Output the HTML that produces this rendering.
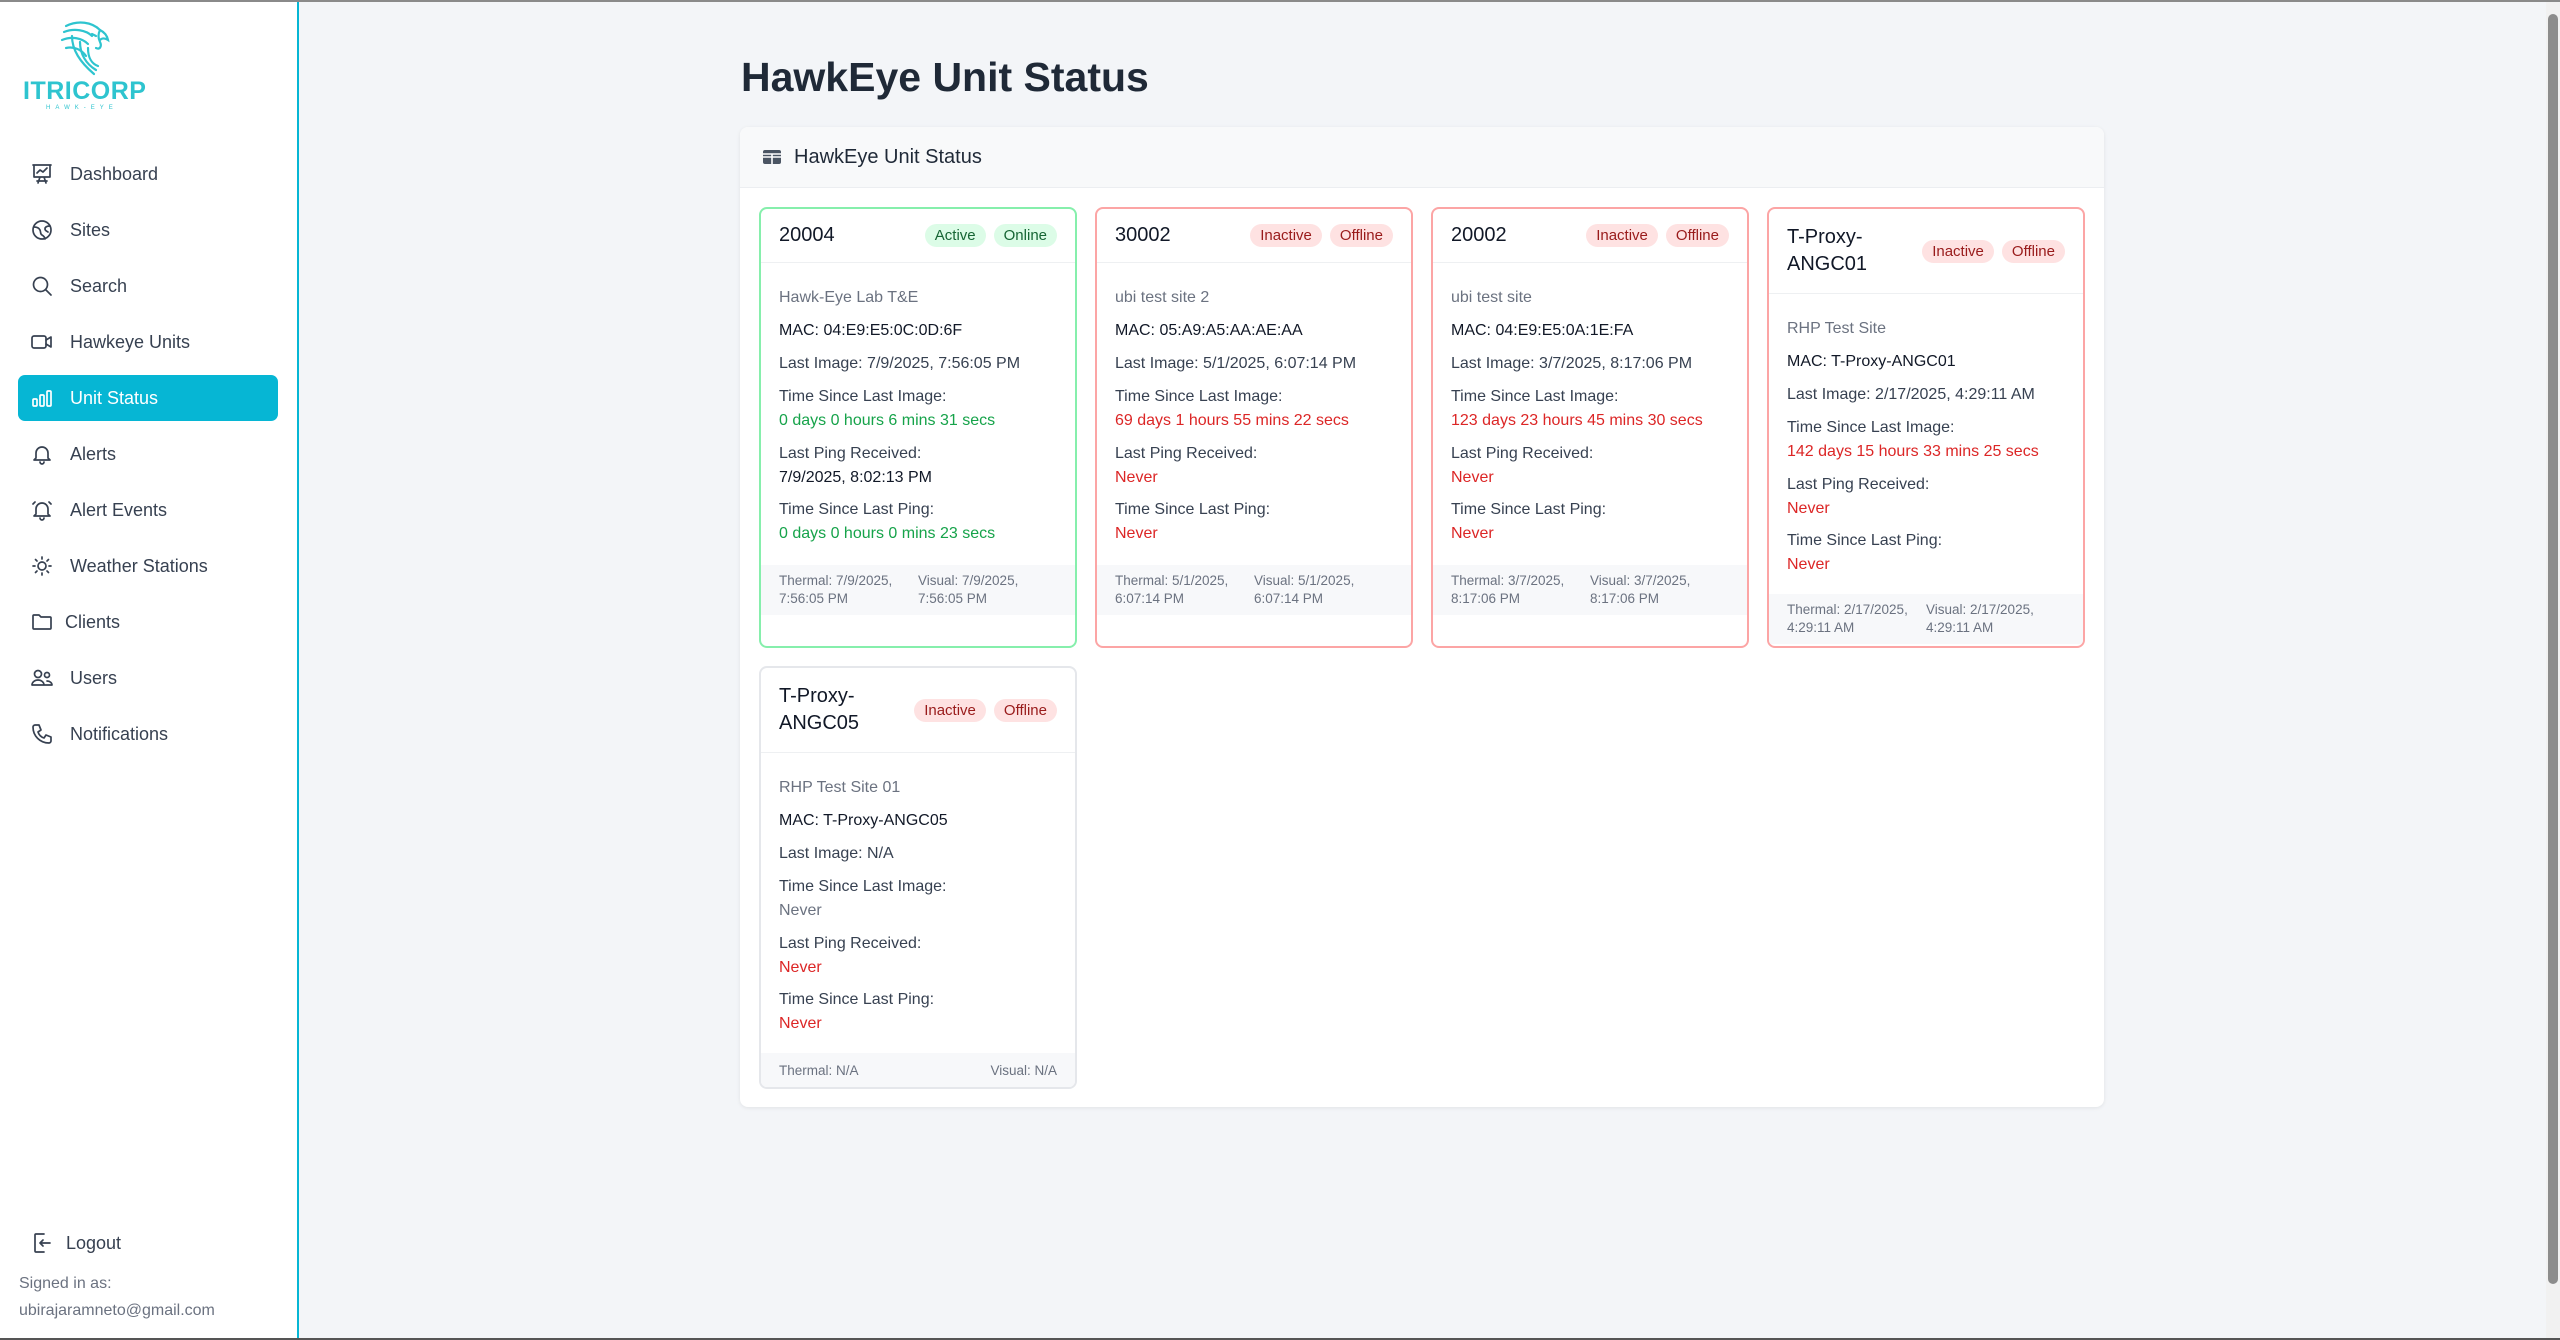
<!DOCTYPE html>
<html><head><meta charset="utf-8">
<style>
*{box-sizing:border-box;margin:0;padding:0}
html,body{width:2560px;height:1340px;overflow:hidden}
body{font-family:"Liberation Sans",sans-serif;background:#f3f5f8;position:relative;color:#1f2937}
.topline{position:absolute;left:0;top:0;width:2560px;height:2px;background:#8a8a8a;z-index:5}
.botline{position:absolute;left:0;bottom:0;width:2560px;height:2px;background:#555;z-index:5}
.side{position:absolute;left:0;top:0;width:299px;height:1340px;background:#fff;border-right:2px solid #06b6d4}
.nav{position:absolute;left:18px;width:260px;height:46px;display:flex;align-items:center;font-size:18px;color:#374151;border-radius:7px}
.nav svg{position:absolute;left:12px;width:24px;height:24px;fill:none;stroke:#374151;stroke-width:1.7;stroke-linecap:round;stroke-linejoin:round}
.nav span{position:absolute;left:52px}
.nav.act{background:#06b6d4;color:#fff}
.nav.act svg{stroke:#fff}
.scroll{position:absolute;right:0;top:0;width:14px;height:1340px;background:#f1f1f1}
.thumb{position:absolute;right:2px;top:14px;width:10px;height:1270px;background:#8c8c8c;border-radius:5px}
h1{position:absolute;left:741px;top:54px;font-size:41px;font-weight:bold;color:#1f2937}
.box{position:absolute;left:740px;top:127px;width:1364px;height:980px;background:#fff;border-radius:8px;box-shadow:0 1px 4px rgba(0,0,0,.08)}
.boxh{height:61px;background:#f8f9fa;border-bottom:1px solid #eceef1;border-radius:8px 8px 0 0;display:flex;align-items:center;padding-left:22px;font-size:20px;color:#1f2937}
.card{position:absolute;width:318px;border:2px solid #e5e7eb;border-radius:8px;background:#fff;overflow:hidden}
.card.g{border-color:#86efac}
.card.r{border-color:#fca5a5}
.ch{display:flex;align-items:center;justify-content:space-between;padding:0 18px 0 18px;border-bottom:1px solid #eef0f2;font-size:20px;color:#111827}
.ch .t{line-height:27px;font-weight:normal}
.badges{display:flex;gap:8px}
.b{font-size:15px;padding:2px 10px;border-radius:12px;line-height:19px}
.bg{background:#dcfce7;color:#166534}
.br{background:#fee2e2;color:#991b1b}
.body{padding:23px 18px 0 18px;font-size:16px;line-height:24px;color:#374151}
.body p{margin-bottom:9px}
.body p:nth-child(5){margin-bottom:8px}
.site{color:#6b7280}
.gr{color:#16a34a}.rd{color:#dc2626}.gy{color:#6b7280}.bk{color:#111827}
.ft{position:absolute;left:0;right:0;background:#f7f8fa;padding:7px 18px;font-size:13.5px;line-height:18px;color:#6b7280;display:flex}
.ft div{width:145px}
</style></head><body>
<div class="topline"></div>
<div class="side">
  <svg style="position:absolute;left:60px;top:20px" width="50" height="56" viewBox="0 0 50 56" fill="none" stroke="#2ec4cf" stroke-width="2.2" stroke-linecap="round">
    <path d="M6 6 C18 0 32 2 40 10 C44 12 47 15 48 20 C45 18 42 18 40 20"/>
    <path d="M40 10 C38 14 38 18 40 22 C42 26 40 30 36 28"/>
    <path d="M4 12 C14 8 26 10 32 16"/>
    <path d="M2 20 C12 16 22 18 28 24"/>
    <path d="M6 28 C14 26 22 30 26 36"/>
    <path d="M12 16 C12 30 20 42 34 54"/>
    <path d="M20 22 C20 34 26 44 36 50"/>
    <path d="M28 28 C28 38 32 44 38 46"/>
    <path d="M32 14 L36 16"/>
  </svg>
  <div style="position:absolute;left:23px;top:77px;font-size:25px;font-weight:bold;color:#2ec4cf;letter-spacing:0.5px">ITRICORP</div>
  <div style="position:absolute;left:46px;top:105px;font-size:6px;color:#2ec4cf;letter-spacing:5px">HAWK-EYE</div>

  <div class="nav" style="top:151px"><svg viewBox="0 0 24 24"><path d="M3 3h18M4 3v12h16V3M8 21l2-6M16 21l-2-6M7 19h10M7 11l3-3 3 2 4-4"/></svg><span>Dashboard</span></div>
  <div class="nav" style="top:207px"><svg viewBox="0 0 24 24"><circle cx="12" cy="12" r="9"/><path d="M4 9c3 0 5 1 6 3s0 4 2 5 3 3 3 4M20 8c-3 0-5 1-5 3s2 2 3 3"/></svg><span>Sites</span></div>
  <div class="nav" style="top:263px"><svg viewBox="0 0 24 24"><circle cx="10.5" cy="10.5" r="7"/><path d="M16 16l5 5"/></svg><span>Search</span></div>
  <div class="nav" style="top:319px"><svg viewBox="0 0 24 24"><rect x="2" y="6" width="14" height="12" rx="2"/><path d="M16 10l5-3v10l-5-3"/></svg><span>Hawkeye Units</span></div>
  <div class="nav act" style="top:375px"><svg viewBox="0 0 24 24"><rect x="3" y="13" width="4" height="7" rx="1"/><rect x="10" y="9" width="4" height="11" rx="1"/><rect x="17" y="5" width="4" height="15" rx="1"/></svg><span>Unit Status</span></div>
  <div class="nav" style="top:431px"><svg viewBox="0 0 24 24"><path d="M6 16V11a6 6 0 0112 0v5l2 2H4l2-2zM10 20a2 2 0 004 0"/></svg><span>Alerts</span></div>
  <div class="nav" style="top:487px"><svg viewBox="0 0 24 24"><path d="M6 16V11a6 6 0 0112 0v5l2 2H4l2-2zM10 20a2 2 0 004 0M3 6l2-2M21 6l-2-2"/></svg><span>Alert Events</span></div>
  <div class="nav" style="top:543px"><svg viewBox="0 0 24 24"><circle cx="12" cy="12" r="4"/><path d="M12 3v2M12 19v2M3 12h2M19 12h2M5.5 5.5l1.5 1.5M17 17l1.5 1.5M5.5 18.5L7 17M17 7l1.5-1.5"/></svg><span>Weather Stations</span></div>
  <div class="nav" style="top:599px"><svg viewBox="0 0 24 24"><path d="M3 6a1 1 0 011-1h5l2 2h9a1 1 0 011 1v10a1 1 0 01-1 1H4a1 1 0 01-1-1z"/></svg><span style="left:47px">Clients</span></div>
  <div class="nav" style="top:655px"><svg viewBox="0 0 24 24"><circle cx="8" cy="8" r="3.5"/><circle cx="17" cy="9" r="2.5"/><path d="M2 19c0-3 3-5 6-5s6 2 6 5zM14 19h8c0-2-2-4-5-4"/></svg><span>Users</span></div>
  <div class="nav" style="top:711px"><svg viewBox="0 0 24 24"><path d="M5 3h4l2 5-3 2c1 3 3 5 6 6l2-3 5 2v4c0 1-1 2-2 2C10 21 3 14 3 5c0-1 1-2 2-2z"/></svg><span>Notifications</span></div>

  <div class="nav" style="top:1220px;left:18px"><svg viewBox="0 0 24 24" style="left:12px"><path d="M14 3H6a1 1 0 00-1 1v16a1 1 0 001 1h8M20 12H10M13 9l-3 3 3 3"/></svg><span style="left:48px">Logout</span></div>
  <div style="position:absolute;left:19px;top:1270px;font-size:16px;color:#6b7280;line-height:27px">Signed in as:<br>ubirajaramneto@gmail.com</div>
</div>

<h1>HawkEye Unit Status</h1>
<div class="box">
  <div class="boxh"><svg width="20" height="16" viewBox="0 0 20 16" style="margin-right:12px"><rect x="1" y="1" width="18" height="14" rx="2" fill="#4b5563"/><path d="M1 8h18M10 5v10M1 5h18" stroke="#fff" stroke-width="1.6"/></svg>HawkEye Unit Status</div>
</div>

<div class="card g" style="left:759px;top:207px;height:441px">
  <div class="ch" style="height:54px"><div class="t">20004</div><div class="badges"><span class="b bg">Active</span><span class="b bg">Online</span></div></div>
  <div class="body">
    <p class="site">Hawk-Eye Lab T&amp;E</p>
    <p class="bk">MAC: 04:E9:E5:0C:0D:6F</p>
    <p>Last Image: 7/9/2025, 7:56:05 PM</p>
    <p>Time Since Last Image:<br><span class="gr">0 days 0 hours 6 mins 31 secs</span></p>
    <p>Last Ping Received:<br><span class="bk">7/9/2025, 8:02:13 PM</span></p>
    <p>Time Since Last Ping:<br><span class="gr">0 days 0 hours 0 mins 23 secs</span></p>
  </div>
  <div class="ft" style="top:356px"><div>Thermal: 7/9/2025,<br>7:56:05 PM</div><div>Visual: 7/9/2025,<br>7:56:05 PM</div></div>
</div>
<div class="card r" style="left:1095px;top:207px;height:441px">
  <div class="ch" style="height:54px"><div class="t">30002</div><div class="badges"><span class="b br">Inactive</span><span class="b br">Offline</span></div></div>
  <div class="body">
    <p class="site">ubi test site 2</p>
    <p class="bk">MAC: 05:A9:A5:AA:AE:AA</p>
    <p>Last Image: 5/1/2025, 6:07:14 PM</p>
    <p>Time Since Last Image:<br><span class="rd">69 days 1 hours 55 mins 22 secs</span></p>
    <p>Last Ping Received:<br><span class="rd">Never</span></p>
    <p>Time Since Last Ping:<br><span class="rd">Never</span></p>
  </div>
  <div class="ft" style="top:356px"><div>Thermal: 5/1/2025,<br>6:07:14 PM</div><div>Visual: 5/1/2025,<br>6:07:14 PM</div></div>
</div>
<div class="card r" style="left:1431px;top:207px;height:441px">
  <div class="ch" style="height:54px"><div class="t">20002</div><div class="badges"><span class="b br">Inactive</span><span class="b br">Offline</span></div></div>
  <div class="body">
    <p class="site">ubi test site</p>
    <p class="bk">MAC: 04:E9:E5:0A:1E:FA</p>
    <p>Last Image: 3/7/2025, 8:17:06 PM</p>
    <p>Time Since Last Image:<br><span class="rd">123 days 23 hours 45 mins 30 secs</span></p>
    <p>Last Ping Received:<br><span class="rd">Never</span></p>
    <p>Time Since Last Ping:<br><span class="rd">Never</span></p>
  </div>
  <div class="ft" style="top:356px"><div>Thermal: 3/7/2025,<br>8:17:06 PM</div><div>Visual: 3/7/2025,<br>8:17:06 PM</div></div>
</div>
<div class="card r" style="left:1767px;top:207px;height:441px">
  <div class="ch" style="height:85px"><div class="t">T-Proxy-<br>ANGC01</div><div class="badges"><span class="b br">Inactive</span><span class="b br">Offline</span></div></div>
  <div class="body">
    <p class="site">RHP Test Site</p>
    <p class="bk">MAC: T-Proxy-ANGC01</p>
    <p>Last Image: 2/17/2025, 4:29:11 AM</p>
    <p>Time Since Last Image:<br><span class="rd">142 days 15 hours 33 mins 25 secs</span></p>
    <p>Last Ping Received:<br><span class="rd">Never</span></p>
    <p>Time Since Last Ping:<br><span class="rd">Never</span></p>
  </div>
  <div class="ft" style="top:385px"><div>Thermal: 2/17/2025,<br>4:29:11 AM</div><div>Visual: 2/17/2025,<br>4:29:11 AM</div></div>
</div>
<div class="card" style="left:759px;top:666px;height:423px">
  <div class="ch" style="height:85px"><div class="t">T-Proxy-<br>ANGC05</div><div class="badges"><span class="b br">Inactive</span><span class="b br">Offline</span></div></div>
  <div class="body">
    <p class="site">RHP Test Site 01</p>
    <p class="bk">MAC: T-Proxy-ANGC05</p>
    <p>Last Image: N/A</p>
    <p>Time Since Last Image:<br><span class="gy">Never</span></p>
    <p>Last Ping Received:<br><span class="rd">Never</span></p>
    <p>Time Since Last Ping:<br><span class="rd">Never</span></p>
  </div>
  <div class="ft" style="top:385px;justify-content:space-between;padding:9px 18px"><span>Thermal: N/A</span><span>Visual: N/A</span></div>
</div>

<div class="scroll"><div class="thumb"></div></div>
<div class="botline"></div>
</body></html>
